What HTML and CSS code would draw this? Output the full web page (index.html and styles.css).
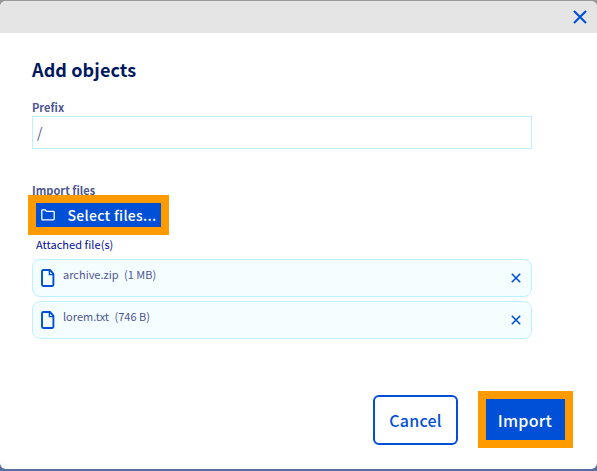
FILE: index.html
```html
<!DOCTYPE html>
<html lang="en">
<head>
<meta charset="utf-8">
<title>Add objects</title>
<link rel="stylesheet" href="styles.css">
</head>
<body>
<main class="dialog">
  <header class="dialog-header">
    <button class="icon-button" aria-label="Close"><svg width="14" height="14" viewBox="0 0 14 14"><path d="M1 1l12 12M13 1L1 13" stroke-width="2.1"/></svg></button>
  </header>
  <div class="dialog-body">
    <h1 class="title"><span>Add objects</span></h1>
    <label class="label" for="prefix"><span>Prefix</span></label>
    <input class="input" id="prefix" value="/">
    <div class="label import-label"><span>Import files</span></div>
    <div class="highlight highlight-select">
      <button class="primary select"><svg width="14" height="12" viewBox="0 0 14 12"><path d="M.8 10.1V1.6q0-.8.8-.8h2.6l1.3 1.5h6.9q.8 0 .8.8v7q0 .8-.8.8H1.6q-.8 0-.8-.8z" stroke-width="1.3"/></svg><span>Select files...</span></button>
    </div>
    <p class="attached"><span>Attached file(s)</span></p>
    <ul class="files">
      <li class="file">
        <svg class="doc" width="14" height="18" viewBox="0 0 14 18"><path d="M2.2 1H9l3.4 3.8v11q0 1.2-1.2 1.2h-9Q1 17 1 15.8V2.2Q1 1 2.2 1z" stroke-width="1.9"/><path d="M8.4 1v4.6h4" stroke-width="1.4"/></svg>
        <span class="name">archive.zip</span><span class="size">(1 MB)</span>
        <button class="icon-button remove" aria-label="Remove"><svg width="10" height="10" viewBox="0 0 10 10"><path d="M.8.8l8.4 8.4M9.2.8L.8 9.2" stroke-width="1.6"/></svg></button>
      </li>
      <li class="file">
        <svg class="doc" width="14" height="18" viewBox="0 0 14 18"><path d="M2.2 1H9l3.4 3.8v11q0 1.2-1.2 1.2h-9Q1 17 1 15.8V2.2Q1 1 2.2 1z" stroke-width="1.9"/><path d="M8.4 1v4.6h4" stroke-width="1.4"/></svg>
        <span class="name">lorem.txt</span><span class="size">(746 B)</span>
        <button class="icon-button remove" aria-label="Remove"><svg width="10" height="10" viewBox="0 0 10 10"><path d="M.8.8l8.4 8.4M9.2.8L.8 9.2" stroke-width="1.6"/></svg></button>
      </li>
    </ul>
  </div>
  <footer class="actions">
    <button class="cancel"><span>Cancel</span></button>
    <div class="highlight"><button class="primary import"><span>Import</span></button></div>
  </footer>
</main>
</body>
</html>
```
FILE: styles.css
```css
* { box-sizing: border-box; }
body {
  margin: 0;
  height: 471px;
  padding: 1px 0 2px;
  overflow: hidden;
  background: linear-gradient(#999 0 50%, #5570a0 50%);
  font-family: "Noto Sans CJK JP", "Noto Sans", sans-serif;
  color: #4d5592;
}
button { margin: 0; padding: 0; border: 0; background: none; font: inherit; display: flex; align-items: center; }
svg { display: block; fill: none; stroke: #0050d7; flex: none; }
.dialog { height: 468px; border-radius: 6px; background: #fff; overflow: hidden; display: flex; flex-direction: column; }
.dialog-header { height: 32px; background: #e5e5e5; display: flex; align-items: center; justify-content: flex-end; padding-right: 10px; }
.dialog-body { padding: 23px 65px 0 32px; flex: 1; }
.title { margin: 0; height: 26px; font-size: 18px; line-height: 26px; font-weight: 700; letter-spacing: .1px; color: #00185e; }
.label { display: block; height: 16px; margin-top: 17px; font-size: 11px; line-height: 16px; font-weight: 700; letter-spacing: .03px; }
.input { display: block; width: 500px; height: 33px; margin-top: 1px; padding: 0 4px 2px; border: 1px solid #bef1ff; border-radius: 0; font: 14px "Noto Sans CJK JP", sans-serif; color: #4d5592; outline: 0; }
.import-label { margin-top: 33px; height: 13px; }
.highlight { background: #ff9a00; padding: 8px; }
.highlight-select { position: relative; width: 141px; height: 40px; margin-left: -4px; }
.primary { background: #0050d7; color: #fff; font-weight: 500; }
.primary svg { stroke: #fff; }
.select { width: 125px; height: 24px; padding-left: 5px; gap: 12.5px; font-size: 14px; letter-spacing: .3px; white-space: nowrap; }
.attached { margin: 1px 0 0 4px; height: 16px; font-size: 11px; line-height: 16px; letter-spacing: .05px; color: #000e9c; }
.files { list-style: none; margin: 7px 0 0; padding: 0; display: grid; gap: 4px; }
.file { height: 38px; border: 1px solid #bef1ff; border-radius: 8px; background: #f5feff; display: flex; align-items: flex-start; padding: 7px 10px 0 8px; font-size: 11px; line-height: 14px; }
.doc { margin-top: 2px; }
.name { margin-left: 8px; }
.size { margin-left: 5.5px; }
.remove { margin: 6px 0 0 auto; }
.actions { height: 78px; padding-right: 24px; display: flex; align-items: flex-start; justify-content: flex-end; gap: 20px; font-size: 16px; font-weight: 500; letter-spacing: .25px; }
.cancel { width: 85px; height: 50px; margin-top: 4px; border: 2px solid #0050d7; border-radius: 6px; justify-content: center; letter-spacing: .25px; color: #0050d7; }
.import { width: 79px; height: 41px; justify-content: center; letter-spacing: .25px; padding-right: 1px; }
```
